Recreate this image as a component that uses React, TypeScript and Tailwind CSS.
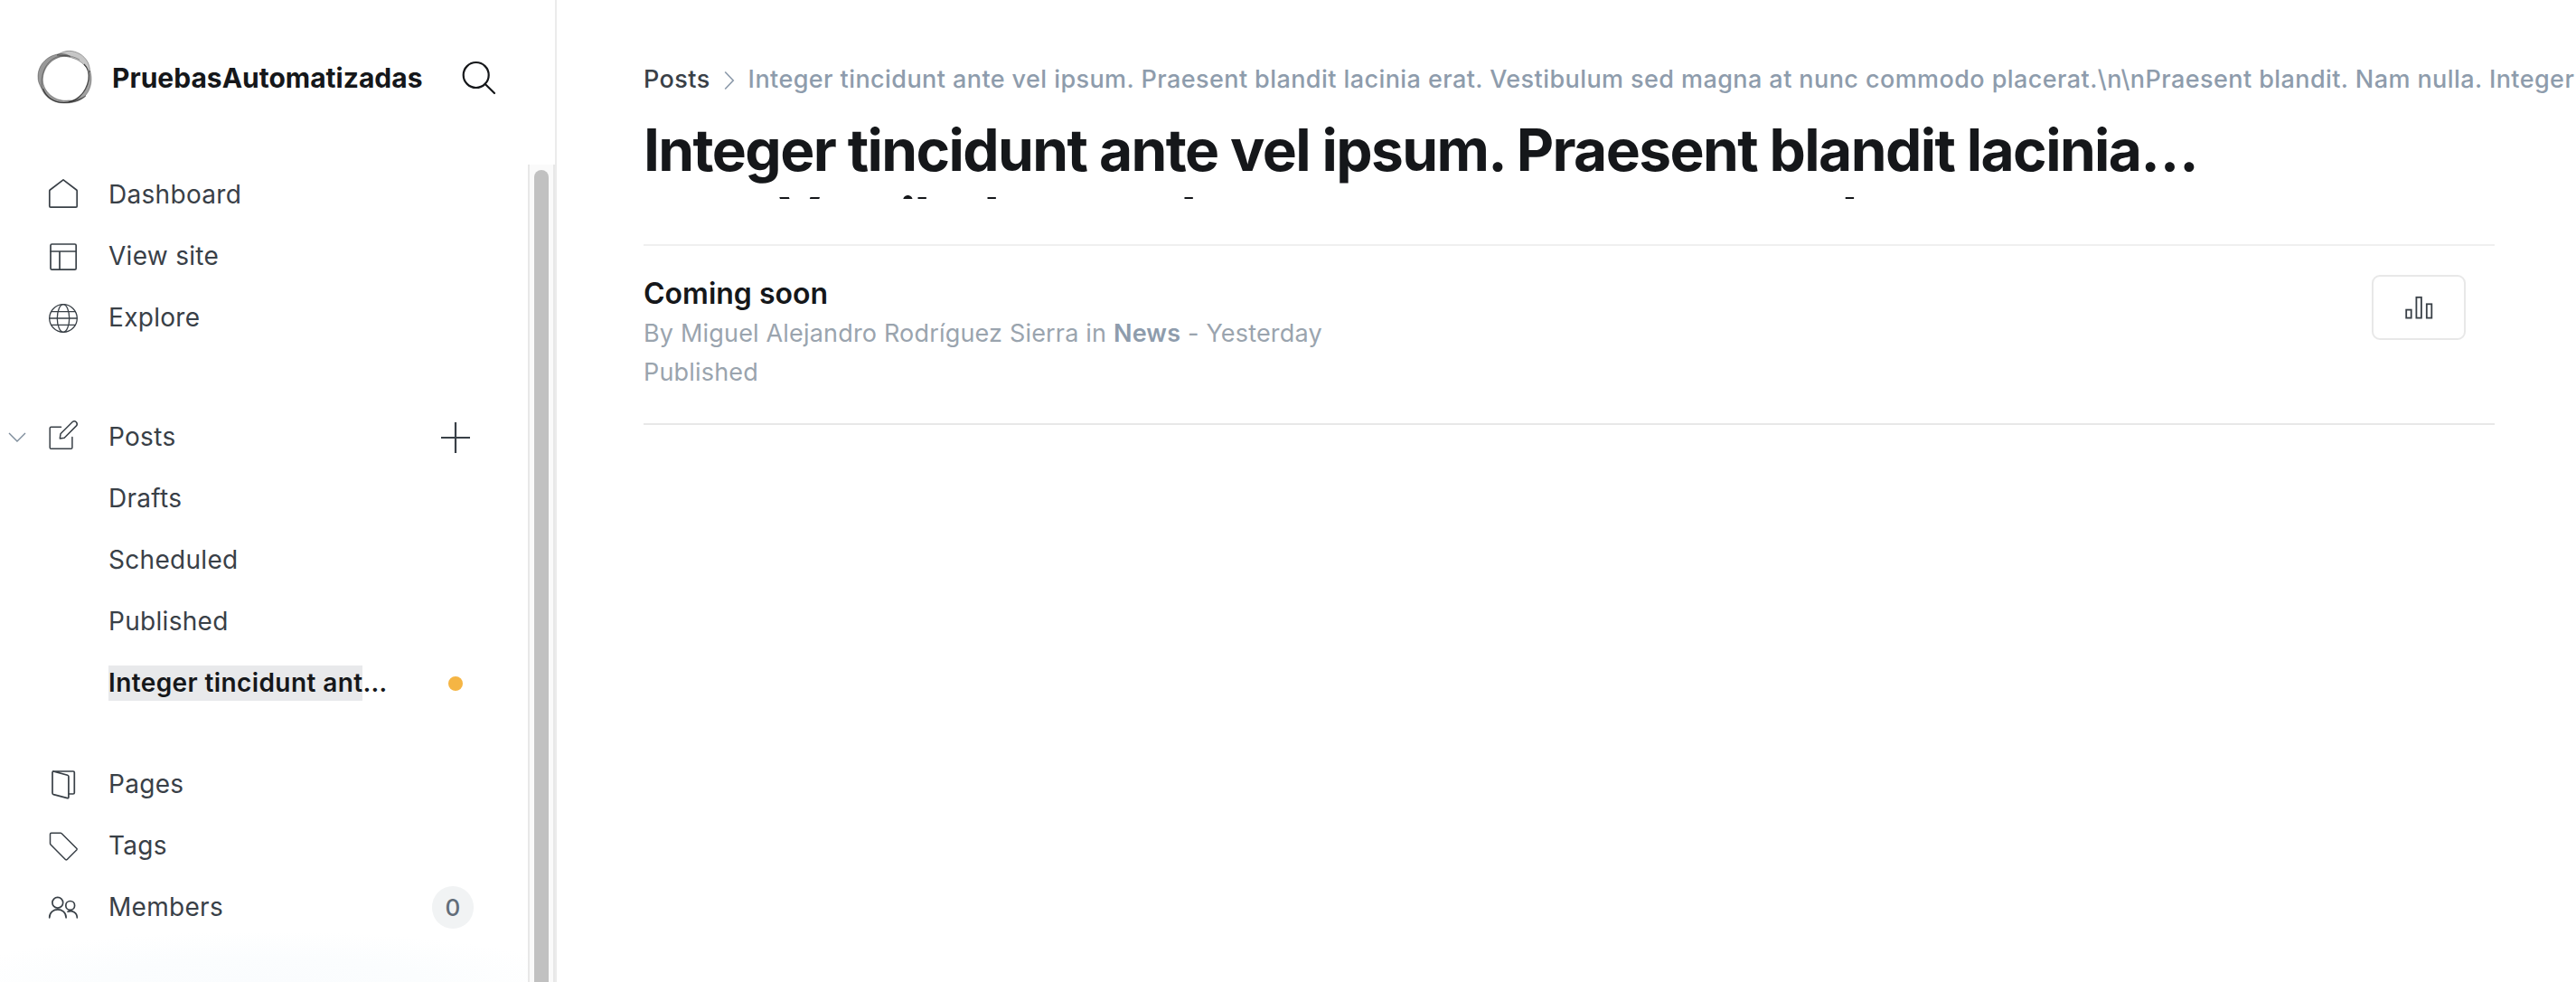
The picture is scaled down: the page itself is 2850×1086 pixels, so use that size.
import { type ReactNode } from 'react';

function Icon({ box, children, width = 1.7 }: { box: string; children: ReactNode; width?: number }) {
  return (
    <svg viewBox={box} className="h-9 w-9 shrink-0 overflow-visible" fill="none" stroke="#394047" strokeWidth={width} strokeLinecap="round" strokeLinejoin="round">
      {children}
    </svg>
  );
}

const HomeIcon = () => (
  <Icon box="52 197 36 36">
    <path d="M70 198.8 L84.6 210 Q85.2 210.5 85.2 211.2 V228 Q85.2 229.2 84 229.2 H56 Q54.8 229.2 54.8 228 V211.2 Q54.8 210.5 55.4 210 Z" />
  </Icon>
);
const LayoutIcon = () => (
  <Icon box="52 265 36 36">
    <rect x="56" y="270" width="28.2" height="28.2" rx="1.5" />
    <path d="M56 278h28M66 278v20" />
  </Icon>
);
const GlobeIcon = () => (
  <Icon box="52 333 36 36" width={1.3}>
    <circle cx="70" cy="352" r="15.3" />
    <ellipse cx="70" cy="352" rx="6.7" ry="15.3" />
    <path d="M54.7 352h30.6M56.6 344.7h26.8M56.6 359.3h26.8" />
  </Icon>
);
const EditIcon = () => (
  <Icon box="52 465 36 36" width={1.5}>
    <path d="M67.5 472.3 H56.5 Q55.2 472.3 55.2 473.6 V495 Q55.2 496.3 56.5 496.3 H78.6 Q79.9 496.3 79.9 495 V483.5" />
    <path d="M66.3 484.9 L67 479.8 L80.3 466.5 Q82.2 464.9 84.3 466.7 Q86.2 468.9 84.5 470.9 L71.2 484.2 Z" />
  </Icon>
);
const PagesIcon = () => (
  <Icon box="52 849 36 36">
    <path d="M58.8 852.9 L74.7 857.2 Q75.9 857.6 75.9 858.8 V881.5 Q75.9 883 74.5 882.6 L59.2 878.6 Q58 878.2 58 877 V854.2 Q58 853 59.2 853 H81 Q82.3 853 82.3 854.3 V876.7 Q82.3 878 81 878 H76.5" />
  </Icon>
);
const TagIcon = () => (
  <Icon box="52 917 36 36" width={1.5}>
    <path d="M56.7 921.2 H67 Q67.7 921.2 68.2 921.7 L85 938.5 Q85.4 939.1 85 939.7 L74 950.7 Q73.3 951.2 72.6 950.7 L56 934 Q55.5 933.5 55.5 932.8 V922.4 Q55.5 921.2 56.7 921.2 Z" />
  </Icon>
);
const MembersIcon = () => (
  <Icon box="52 985 36 36">
    <circle cx="63.8" cy="998.2" r="5.9" />
    <circle cx="77.7" cy="1001.4" r="4.9" />
    <path d="M54.7 1014.8 C54.7 1003 73.1 1003 73.1 1014.8" />
    <path d="M75 1008.2 C79.8 1006.2 85.3 1009.2 85.3 1014.8" />
  </Icon>
);

function Logo() {
  return (
    <svg viewBox="40 54 64 64" className="h-16 w-16 shrink-0" fill="none" stroke="#1d1d1d" strokeWidth="0.7">
      <g fill="#333">
        <path fillOpacity="0.5" strokeOpacity="0.5" d="M68 59.5 C54 60 42.5 70 42 84 C41.8 90 43.5 93 46 98 C49 106 58 114 70 114 C81 114.5 90 111 95 106 C90 109 83 111.5 76 111 C62 113 49.5 103 47.5 91 C46 78 55 65 69 62.5 C72 62 75 62 78 62.5 C75 60.5 72 59.5 68 59.5Z" />
        <path fillOpacity="0.28" strokeOpacity="0.5" d="M63 61 C70 56 78 55 85 58 C93 61 100 69 99.5 80 C96 74 90 68 84 65.5 C77 62.5 70 62 63 61Z" />
        <path fillOpacity="0.45" strokeOpacity="0.5" d="M99.5 78 C102.5 87 101 98 95 105 C91 110 84 113 76 113 C84 111 91 106 95 98 C98 92 99 86 98.3 80Z" />
      </g>
      <path strokeOpacity="0.5" d="M46.5 98 C45 88 47 75 56 67 C63 61 76 59 88 66" />
      <path strokeOpacity="0.75" strokeWidth="1.2" d="M47.5 98 C51 108 60 113.5 71 113.5 C83 113.5 95 104 98 88 C99 80 97 75 93 71" />
    </svg>
  );
}

function Row({ icon, label, children }: { icon?: ReactNode; label: string; children?: ReactNode }) {
  return (
    <a className="relative flex h-[68px] items-center pl-[52px] pr-[60px]">
      {icon ? <span className="mr-8 flex">{icon}</span> : <span className="w-[68px] shrink-0" />}
      <span className="grow">{label}</span>
      {children}
    </a>
  );
}

function Sidebar() {
  return (
    <nav className="flex h-full w-[616px] shrink-0 flex-col border-r-2 border-[#ebebeb]">
      <header className="flex h-[182px] shrink-0 items-start pl-10 pt-[54px]">
        <Logo />
        <h2 className="ml-5 mt-[14px] text-[30px] font-bold leading-9 text-[#15171a]">PruebasAutomatizadas</h2>
        <svg viewBox="508 64 44 44" className="ml-[41px] mt-[10px] h-11 w-11" fill="none" stroke="#15171a" strokeWidth="2.2" strokeLinecap="round">
          <circle cx="526.7" cy="83" r="14" />
          <path d="M536.8 93 L547 103" />
        </svg>
      </header>
      <div className="flex min-h-0 grow">
        <div className="relative w-[584px] shrink-0 overflow-hidden text-[28px] tracking-[0.3px] text-[#394047]">
          <div className="-mt-px flex flex-col">
            <div className="mb-16">
              <Row icon={<HomeIcon />} label="Dashboard" />
              <Row icon={<LayoutIcon />} label="View site" />
              <Row icon={<GlobeIcon />} label="Explore" />
            </div>
            <div className="mb-11">
              <Row icon={<EditIcon />} label="Posts">
                <svg viewBox="0 0 20 12" className="absolute left-[9px] top-[29px] h-3 w-5" fill="none" stroke="#7c8b9a" strokeWidth="1.4">
                  <path d="M1 1 L10 10 L19 1" />
                </svg>
                <svg viewBox="0 0 34 34" className="absolute left-[487px] top-[18px] h-[34px] w-[34px]" stroke="#394047" strokeWidth="2.2">
                  <path d="M1 17h32M17 0v34" />
                </svg>
              </Row>
              <Row label="Drafts" />
              <Row label="Scheduled" />
              <Row label="Published" />
              <a className="flex h-[68px] items-center pl-[120px]">
                <span className="w-[376px] font-semibold tracking-[0.4px] text-[#15171a]">
                  <span className="bg-[#e8e9eb] pb-[3px] pt-[2px]">Integer tincidunt ant</span>…
                </span>
                <span className="mt-[2px] h-4 w-4 rounded-full bg-[#f5b544]" />
              </a>
            </div>
            <div>
              <Row icon={<PagesIcon />} label="Pages" />
              <Row icon={<TagIcon />} label="Tags" />
              <Row icon={<MembersIcon />} label="Members">
                <span className="mt-px flex h-[47px] w-[46px] items-center justify-center rounded-full bg-[#f1f3f4] text-[26px] font-medium tracking-normal text-[#626d79]">0</span>
              </Row>
            </div>
          </div>
          <div className="absolute inset-x-0 bottom-0 h-14 bg-[radial-gradient(ellipse_60%_100%_at_50%_100%,#fafcfe_0%,#fbfdfe_50%,#ffffff00_100%)]" />
        </div>
        <div className="w-[30px] shrink-0 overflow-hidden border-x-2 border-[#e8e8e8] bg-[#fafafa] px-[5px] pt-1.5">
          <div className="mx-auto h-full w-4 rounded-t-full bg-[#c1c1c1]" />
        </div>
      </div>
    </nav>
  );
}

function Main() {
  return (
    <main className="flex min-w-0 grow flex-col overflow-hidden pl-24">
      <div className="mt-[70px] flex h-9 items-center whitespace-nowrap text-[27px] font-medium leading-9 tracking-[0.42px]">
        <span className="text-[#394047]">Posts</span>
        <svg viewBox="0 0 12 22" className="mx-[15px] mt-px h-[22px] w-3 shrink-0" fill="none" stroke="#8e9cac" strokeWidth="1.7">
          <path d="M1.2 1.5 L10.2 11 L1.2 20.5" />
        </svg>
        <span className="text-[#8e9cac]">{'Integer tincidunt ante vel ipsum. Praesent blandit lacinia erat. Vestibulum sed magna at nunc commodo placerat.\\n\\nPraesent blandit. Nam nulla. Integer'}</span>
      </div>
      <h1 className="mt-[22px] h-[92px] overflow-hidden whitespace-nowrap text-[64px] font-bold leading-[76px] tracking-[-1.6px] text-[#15171a]">
        <span className="block">Integer tincidunt ante vel ipsum. Praesent blandit lacinia…</span>
        <span className="block">erat. Vestibulum sed magna at nunc commodo</span>
      </h1>
      <section className="mr-[90px] mt-[50px] flex h-[200px] items-start justify-between border-y-2 border-b-[#e8e8e8] border-t-[#efefef] pr-8 pt-8">
        <div className="pt-px text-[27px] tracking-[0.18px] text-[#9aa4ae]">
          <h3 className="text-[32px] font-semibold leading-10 tracking-normal text-[#15171a]">Coming soon</h3>
          <p className="mt-[2px] leading-[43px]">
            By Miguel Alejandro Rodríguez Sierra in <span className="font-semibold text-[#8e9cac]">News</span> - Yesterday
          </p>
          <p className="leading-[43px]">Published</p>
        </div>
        <button className="flex h-[72px] w-[104px] items-center justify-center rounded-[9px] border-2 border-[#e8e8e8]">
          <svg viewBox="2660 324 32 32" className="h-8 w-8" fill="none" stroke="#394047" strokeWidth="1.8">
            <rect x="2662.2" y="342.6" width="5.5" height="9" />
            <rect x="2673.4" y="328.8" width="5.5" height="22.8" />
            <rect x="2684.8" y="336.3" width="5.5" height="15.3" />
          </svg>
        </button>
      </section>
    </main>
  );
}

export default function App() {
  return (
    <div className="flex h-[1086px] w-[2850px] overflow-hidden bg-white font-['Inter',sans-serif]">
      <Sidebar />
      <Main />
    </div>
  );
}
